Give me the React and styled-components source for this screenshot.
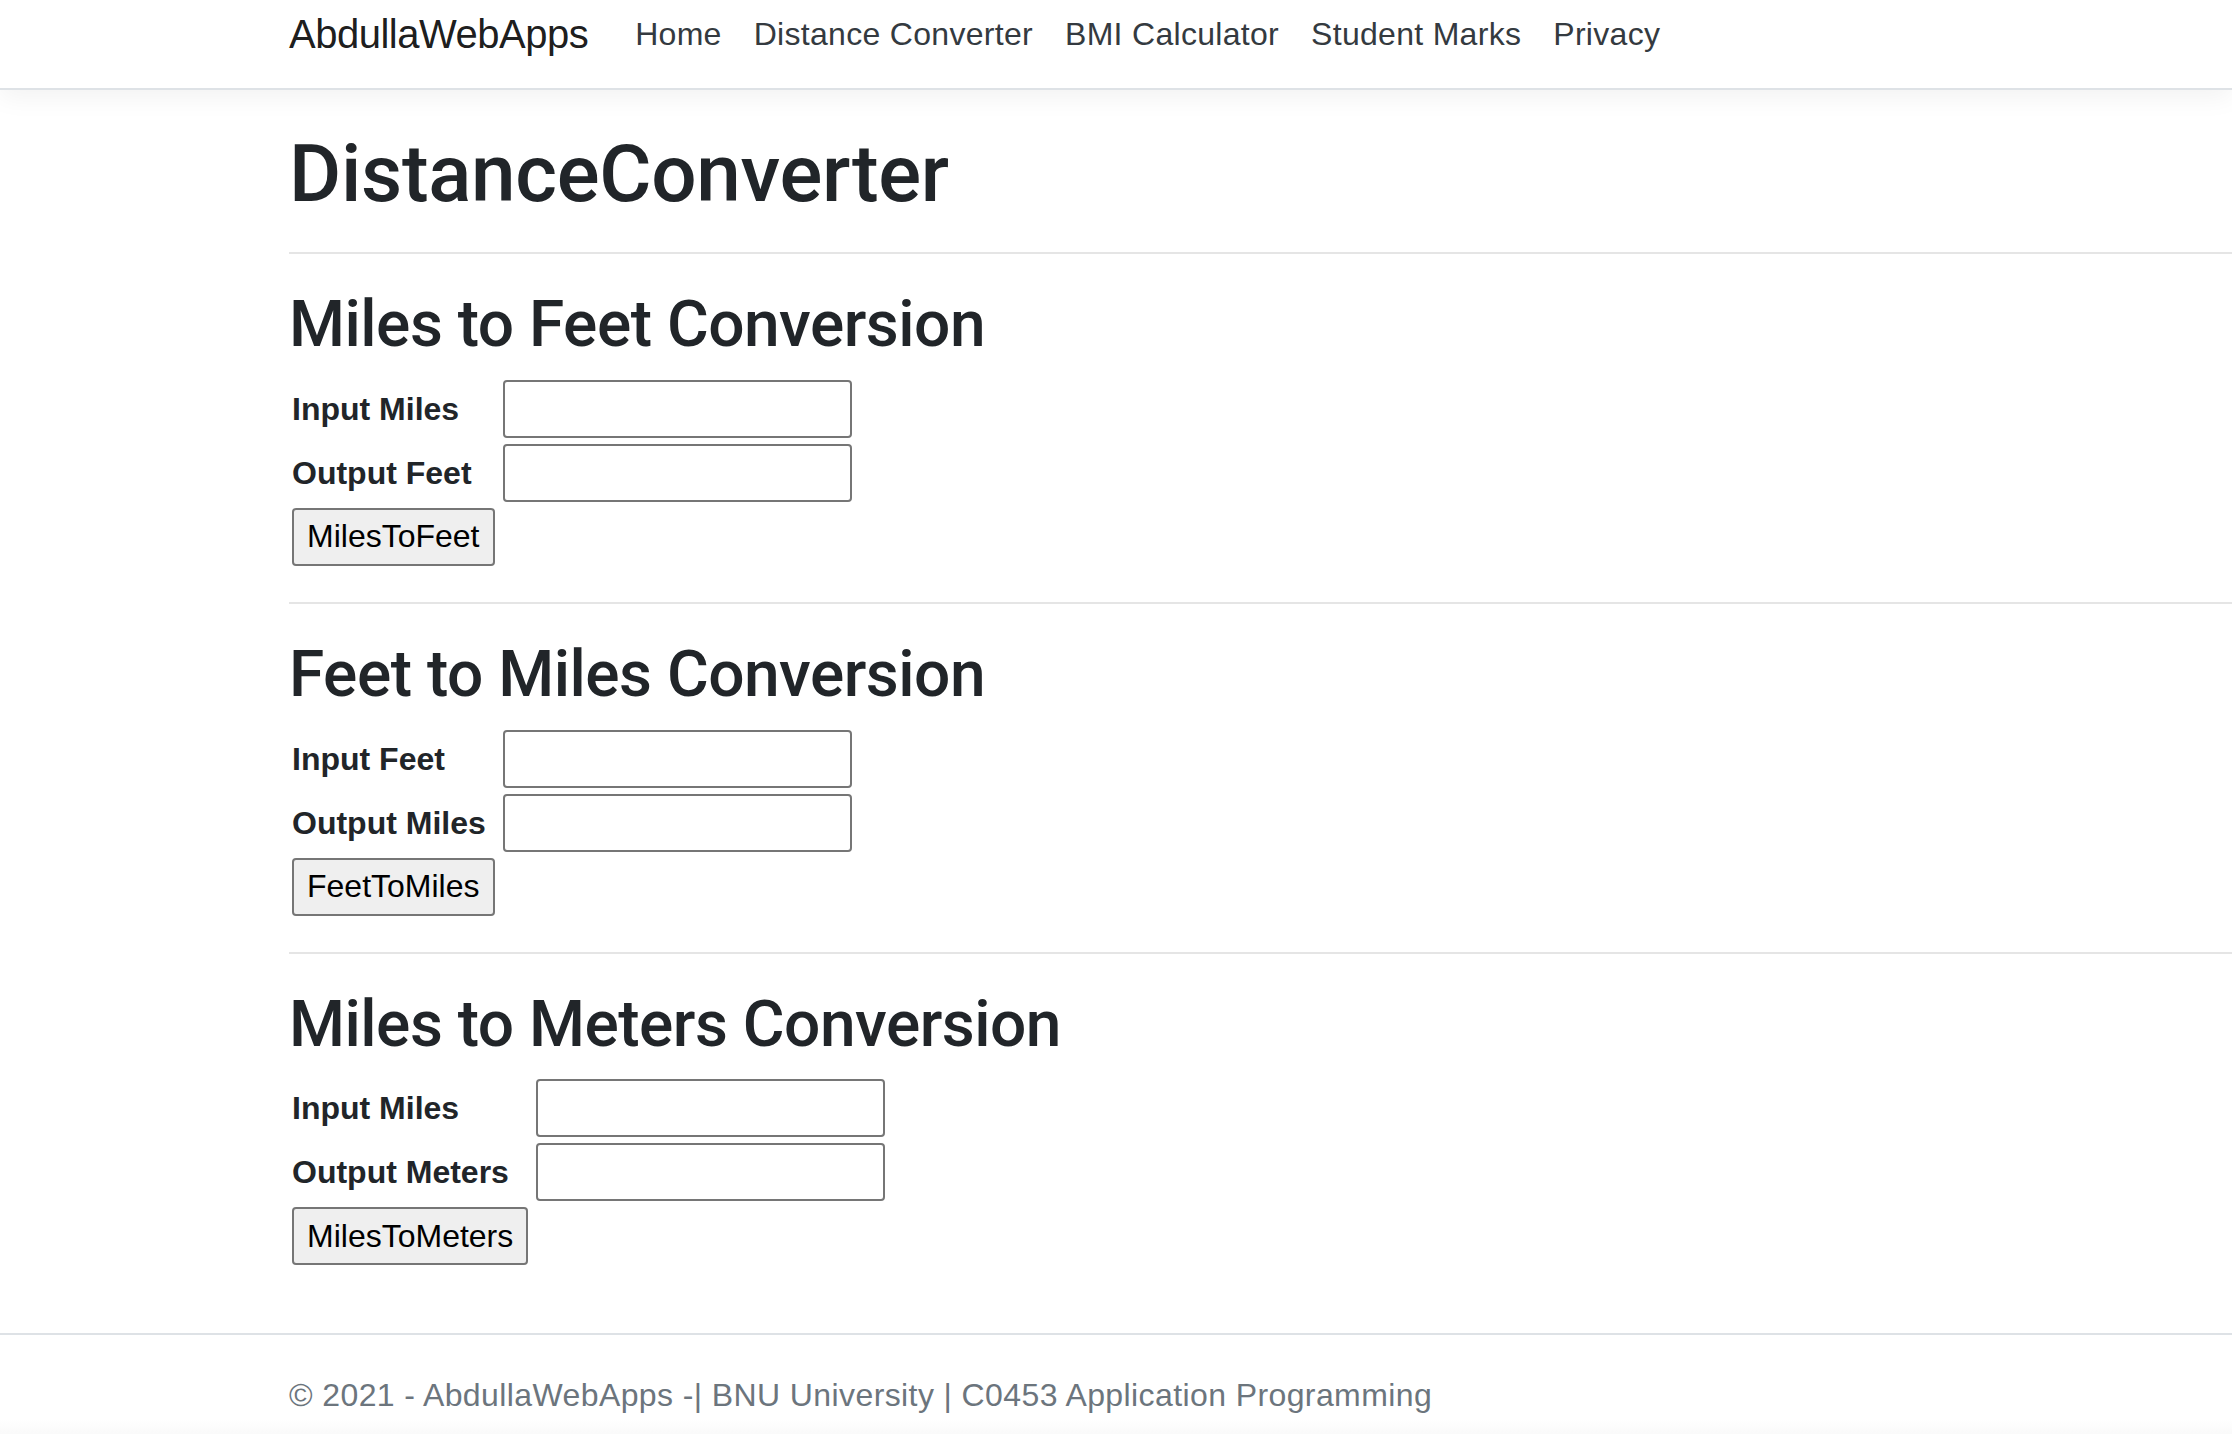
import React from 'react';
import styled, { createGlobalStyle } from 'styled-components';

const GlobalStyle = createGlobalStyle`
  html, body {
    margin: 0;
    overflow: hidden;
    background: #fff;
  }
  body {
    font-family: "Liberation Sans", Arial, sans-serif;
    font-size: 32px;
    line-height: 1.5;
    color: #212529;
  }
  * { box-sizing: border-box; }
`;

const conversions = [
  {
    title: 'Miles to Feet Conversion',
    input: 'Input Miles',
    output: 'Output Feet',
    action: 'MilesToFeet',
  },
  {
    title: 'Feet to Miles Conversion',
    input: 'Input Feet',
    output: 'Output Miles',
    action: 'FeetToMiles',
  },
  {
    title: 'Miles to Meters Conversion',
    input: 'Input Miles',
    output: 'Output Meters',
    action: 'MilesToMeters',
  },
];

const links = ['Home', 'Distance Converter', 'BMI Calculator', 'Student Marks', 'Privacy'];

export default function App() {
  return (
    <>
      <GlobalStyle />
      <Header>
        <NavBar>
          <Brand href="#">AbdullaWebApps</Brand>
          <NavList>
            {links.map(l => (
              <li key={l}>
                <NavLink href="#">{l}</NavLink>
              </li>
            ))}
          </NavList>
        </NavBar>
      </Header>

      <Main>
        <Title>DistanceConverter</Title>
        {conversions.map(c => (
          <React.Fragment key={c.title}>
            <Divider />
            <Section>
              <SectionTitle>{c.title}</SectionTitle>
              <FormGrid>
                <Label>{c.input}</Label>
                <TextInput type="text" />
                <Label>{c.output}</Label>
                <TextInput type="text" />
                <Button type="button">{c.action}</Button>
              </FormGrid>
            </Section>
          </React.Fragment>
        ))}
      </Main>

      <Footer>© 2021 - AbdullaWebApps -| BNU University | C0453 Application Programming</Footer>
    </>
  );
}

const Header = styled.header`
  position: relative;
  z-index: 1;
  background: #fff;
  padding-bottom: 20px;
  border-bottom: 2px solid #dee2e6;
  box-shadow: 0 8px 24px rgba(0, 0, 0, 0.05);
`;

const NavBar = styled.nav`
  display: flex;
  align-items: center;
  height: 68px;
  padding-left: 289px;
`;

const Brand = styled.a`
  font-size: 40px;
  letter-spacing: -0.5px;
  color: rgba(0, 0, 0, 0.9);
  text-decoration: none;
  margin-right: 31px;
  white-space: nowrap;
`;

const NavList = styled.ul`
  display: flex;
  list-style: none;
  margin: 0;
  padding: 0;
`;

const NavLink = styled.a`
  display: block;
  padding: 0 16px;
  letter-spacing: 0.3px;
  color: #343a40;
  text-decoration: none;
  white-space: nowrap;
`;

const Main = styled.main`
  padding: 36px 0 32px 289px;
`;

const Title = styled.h1`
  font-family: Roboto, "Liberation Sans", sans-serif;
  font-size: 80px;
  font-weight: 500;
  letter-spacing: -0.3px;
  line-height: 1.2;
  margin: 0 0 30px;
`;

const Divider = styled.hr`
  border: 0;
  border-top: 2px solid rgba(0, 0, 0, 0.1);
  margin: 0;
`;

const Section = styled.section`
  padding: 33px 0 36px;
`;

const SectionTitle = styled.h2`
  font-family: Roboto, "Liberation Sans", sans-serif;
  font-size: 64px;
  font-weight: 500;
  letter-spacing: -0.5px;
  line-height: 1.2;
  margin: 0 0 16px;
`;

const FormGrid = styled.div`
  display: grid;
  grid-template-columns: max-content max-content;
  justify-content: start;
  align-items: center;
  column-gap: 8px;
  row-gap: 6px;
  padding-left: 3px;
`;

const Label = styled.label`
  font-weight: 700;
`;

const TextInput = styled.input`
  width: 349px;
  height: 58px;
  padding: 2px 4px;
  font: inherit;
  border: 2px solid #767676;
  border-radius: 4px;
  background: #fff;
`;

const Button = styled.button`
  grid-column: 1;
  justify-self: start;
  height: 58px;
  padding: 0 13px;
  font-family: inherit;
  font-size: 32px;
  color: #000;
  background: #efefef;
  border: 2px solid #767676;
  border-radius: 4px;
`;

const Footer = styled.footer`
  border-top: 2px solid #dee2e6;
  padding-left: 289px;
  line-height: 120px;
  letter-spacing: 0.4px;
  color: #6c757d;
  white-space: nowrap;
  background: linear-gradient(to bottom, #fff 70%, #f2f2f2 100%);
`;
